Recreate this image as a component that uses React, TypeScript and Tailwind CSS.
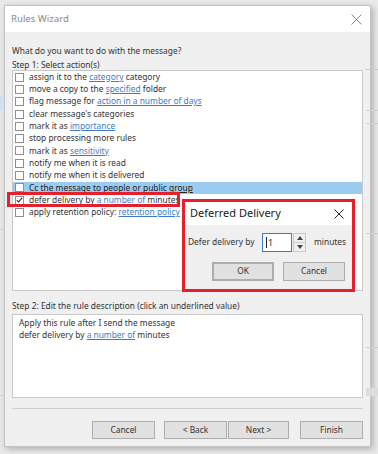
import React from 'react';

type Part = { t: string; link?: boolean };

const actions: Part[][] = [
  [{ t: 'assign it to the ' }, { t: 'category', link: true }, { t: ' category' }],
  [{ t: 'move a copy to the ' }, { t: 'specified', link: true }, { t: ' folder' }],
  [{ t: 'flag message for ' }, { t: 'action in a number of days', link: true }],
  [{ t: "clear message's categories" }],
  [{ t: 'mark it as ' }, { t: 'importance', link: true }],
  [{ t: 'stop processing more rules' }],
  [{ t: 'mark it as ' }, { t: 'sensitivity', link: true }],
  [{ t: 'notify me when it is read' }],
  [{ t: 'notify me when it is delivered' }],
  [{ t: 'Cc the message to people or public group' }],
  [{ t: 'defer delivery by ' }, { t: 'a number of', link: true }, { t: ' minutes' }],
  [{ t: 'apply retention policy: ' }, { t: 'retention policy', link: true }],
];

const Link = ({ children }: { children: React.ReactNode }) => (
  <span className="text-[#3e7cc8] underline underline-offset-1">{children}</span>
);

const Btn = ({ label, className = '' }: { label: string; className?: string }) => (
  <div className={`h-[18px] bg-[#e1e1e1] border border-[#adadad] flex items-center justify-center text-[#333] ${className}`}>
    {label}
  </div>
);

export default function App() {
  return (
    <div className="w-[378px] h-[454px] bg-[#e9e9e9] relative overflow-hidden font-['Noto_Sans',sans-serif] text-[8.4px] text-[#333]">
      {/* window behind */}
      <div className="absolute right-0 top-[69px] w-[12px] h-px bg-[#c9c9c9]" />
      <div className="absolute right-0 top-[110px] w-[12px] h-px bg-[#d0d0d0]" />
      <div className="absolute right-0 top-[123px] w-[12px] h-px bg-[#d0d0d0]" />
      <div className="absolute right-0 top-[233px] w-[12px] h-px bg-[#cfcfcf]" />
      <div className="absolute right-0 top-[347px] w-[12px] h-px bg-[#cfcfcf]" />
      <div className="absolute right-0 top-[388px] w-[12px] h-[8px] bg-[#dcdcdc]" />
      <div className="absolute left-0 top-[96px] w-[4px] h-[14px] bg-[#cfe0f2]" />
      <div className="absolute left-0 top-[229px] w-[4px] h-px bg-[#cfcfcf]" />
      <div className="absolute left-0 top-[395px] w-[4px] h-px bg-[#cfcfcf]" />

      {/* Rules Wizard */}
      <div className="ml-[4px] mt-[5px] w-[367px] h-[442px] bg-[#f0f0f0] border border-[#c4c4c4] shadow-[2px_2px_6px_rgba(0,0,0,0.25)] flex flex-col overflow-hidden">
        <div className="h-[26px] bg-white flex items-center justify-between pl-[6px] pr-[8px] shrink-0">
          <span className="text-[9.6px] text-[#8a8a8a]">Rules Wizard</span>
          <svg width="11" height="11" viewBox="0 0 11 11" className="stroke-[#8a8a8a]">
            <path d="M0.5 0.5 L10.5 10.5 M10.5 0.5 L0.5 10.5" strokeWidth="1" />
          </svg>
        </div>

        <div className="flex flex-col px-[7px] pt-[12px]">
          <div className="h-[14px] leading-[14px]">What do you want to do with the message?</div>
          <div className="h-[10px] leading-[10px] mt-[2px]">Step 1: Select action(s)</div>

          <div className="mt-0 h-[221px] bg-white border border-[#c8c8c8] flex flex-col">
            {actions.map((parts, i) => {
              const selected = i === 9;
              const checked = i === 10;
              return (
                <div
                  key={i}
                  className={`h-[12.3px] shrink-0 flex items-center gap-[5px] pl-[2px] whitespace-nowrap ${selected ? 'bg-[#9ccbf0]' : ''}`}
                >
                  <div className="w-[9px] h-[9px] bg-white border border-[#8f8f8f] flex items-center justify-center shrink-0">
                    {checked && (
                      <svg width="8" height="8" viewBox="0 0 8 8">
                        <path d="M1 4.2 L3 6.3 L7 1.5" fill="none" stroke="#222" strokeWidth="1.2" />
                      </svg>
                    )}
                  </div>
                  <span className={selected ? 'underline underline-offset-1 text-[#222]' : ''}>
                    {parts.map((p, j) => (p.link ? <Link key={j}>{p.t}</Link> : <span key={j}>{p.t}</span>))}
                  </span>
                </div>
              );
            })}
          </div>

          <div className="h-[14px] leading-[14px] mt-[8px]">Step 2: Edit the rule description (click an underlined value)</div>
          <div className="mt-[1px] h-[84px] bg-white border border-[#c8c8c8] px-[6px] pt-[2px] leading-[12px]">
            <div>Apply this rule after I send the message</div>
            <div>
              defer delivery by <Link>a number of</Link> minutes
            </div>
          </div>

          <div className="mt-[10px] h-px bg-[#cfcfcf]" />

          <div className="mt-[12px] flex pl-[80px]">
            <Btn label="Cancel" className="w-[63px]" />
            <Btn label="< Back" className="w-[63px] ml-[9px]" />
            <Btn label="Next >" className="w-[61px] ml-[1px]" />
            <Btn label="Finish" className="w-[63px] ml-[11px]" />
          </div>
        </div>
      </div>

      {/* highlight on the defer row */}
      <div className="absolute left-[7px] top-[192px] w-[173px] h-[15px] border-[3px] border-[#e3202b]" />

      {/* Deferred Delivery */}
      <div className="absolute left-[182px] top-[199px] w-[173px] h-[93px] border-[3px] border-[#e3202b] bg-[#f0f0f0] flex flex-col">
        <div className="h-[23px] bg-white flex items-center justify-between pl-[5px] pr-[8px] shrink-0">
          <span className="text-[11px] text-[#222]">Deferred Delivery</span>
          <svg width="10" height="10" viewBox="0 0 10 10">
            <path d="M0.5 0.5 L9.5 9.5 M9.5 0.5 L0.5 9.5" stroke="#222" strokeWidth="1" />
          </svg>
        </div>
        <div className="flex items-center pl-[3px] mt-[8px]">
          <span className="w-[74px]">Defer delivery by</span>
          <div className="w-[30px] h-[19px] bg-white border border-[#2f7fd0] flex items-center pl-[3px] text-[9px]">
            <span className="w-px h-[11px] bg-[#222] mr-[1px]" />1
          </div>
          <div className="w-[13px] h-[19px] ml-[1px] bg-[#f0f0f0] border border-[#c9c9c9] flex flex-col">
            <div className="flex-1 flex items-center justify-center border-b border-[#c9c9c9]">
              <svg width="6" height="4" viewBox="0 0 6 4"><path d="M0 4 L3 0 L6 4 Z" fill="#444" /></svg>
            </div>
            <div className="flex-1 flex items-center justify-center">
              <svg width="6" height="4" viewBox="0 0 6 4"><path d="M0 0 L3 4 L6 0 Z" fill="#444" /></svg>
            </div>
          </div>
          <span className="ml-[8px]">minutes</span>
        </div>
        <div className="flex mt-[10px] pl-[27px]">
          <Btn label="OK" className="w-[62px] h-[19px] border-[#2f7fd0] border-2" />
          <Btn label="Cancel" className="w-[62px] h-[19px] ml-[9px]" />
        </div>
      </div>
    </div>
  );
}
